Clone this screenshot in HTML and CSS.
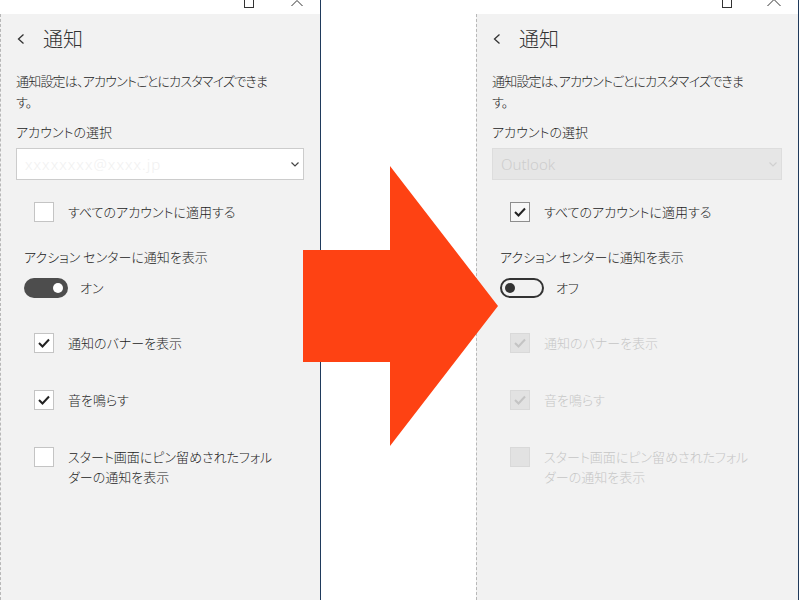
FILE: index.html
```html
<!DOCTYPE html>
<html lang="ja">
<head>
  <meta charset="UTF-8" />
  <title>通知</title>
  <link rel="stylesheet" href="styles.css">
</head>
<body>

<div class="screen">

  <div class="panel left">
    <div class="titlebar">
      <span class="max-icon"></span>
      <svg class="close-icon" width="12" height="6" viewBox="0 0 12 6"><path d="M0.5 6 L6 0.5 L11.5 6" fill="none" stroke="#333" stroke-width="1"/></svg>
    </div>
    <div class="body">
      <div class="header">
        <svg class="back" width="8" height="10" viewBox="0 0 8 10"><path d="M6.5 0.5 L1.5 5 L6.5 9.5" fill="none" stroke="#333" stroke-width="1.3"/></svg>
        <span class="title">通知</span>
      </div>
      <div class="desc">通知設定は、アカウントごとにカスタマイズできま<br>す。</div>
      <div class="label">アカウントの選択</div>
      <div class="select">
        <span class="select-text masked">xxxxxxxx@xxxx.jp</span>
        <svg class="chev" width="8" height="5" viewBox="0 0 8 5"><path d="M0.5 0.5 L4 4 L7.5 0.5" fill="none" stroke="#444" stroke-width="1.2"/></svg>
      </div>
      <div class="check-row first">
        <span class="box"></span>
        <span>すべてのアカウントに適用する</span>
      </div>
      <div class="section-label">アクション センターに通知を表示</div>
      <div class="toggle-row">
        <span class="toggle on"><span class="knob"></span></span>
        <span>オン</span>
      </div>
      <div class="check-row item">
        <span class="box"><svg width="18" height="18" viewBox="0 0 18 18"><path d="M4 9 L7.5 12.5 L14 5.5" fill="none" stroke="#222" stroke-width="2"/></svg></span>
        <span>通知のバナーを表示</span>
      </div>
      <div class="check-row item">
        <span class="box"><svg width="18" height="18" viewBox="0 0 18 18"><path d="M4 9 L7.5 12.5 L14 5.5" fill="none" stroke="#222" stroke-width="2"/></svg></span>
        <span>音を鳴らす</span>
      </div>
      <div class="check-row item">
        <span class="box"></span>
        <span>スタート画面にピン留めされたフォル<br>ダーの通知を表示</span>
      </div>
    </div>
  </div>

  <div class="gap"></div>

  <div class="panel right">
    <div class="titlebar">
      <span class="max-icon"></span>
      <svg class="close-icon" width="14" height="7" viewBox="0 0 14 7"><path d="M0.5 7 L7 0.5 L13.5 7" fill="none" stroke="#333" stroke-width="1"/></svg>
    </div>
    <div class="body">
      <div class="header">
        <svg class="back" width="8" height="10" viewBox="0 0 8 10"><path d="M6.5 0.5 L1.5 5 L6.5 9.5" fill="none" stroke="#333" stroke-width="1.3"/></svg>
        <span class="title">通知</span>
      </div>
      <div class="desc">通知設定は、アカウントごとにカスタマイズできま<br>す。</div>
      <div class="label">アカウントの選択</div>
      <div class="select disabled">
        <span class="select-text">Outlook</span>
        <svg class="chev" width="8" height="5" viewBox="0 0 8 5"><path d="M0.5 0.5 L4 4 L7.5 0.5" fill="none" stroke="#d0d0d0" stroke-width="1.2"/></svg>
      </div>
      <div class="check-row first">
        <span class="box checked"><svg width="18" height="18" viewBox="0 0 18 18"><path d="M4 9 L7.5 12.5 L14 5.5" fill="none" stroke="#222" stroke-width="2"/></svg></span>
        <span>すべてのアカウントに適用する</span>
      </div>
      <div class="section-label">アクション センターに通知を表示</div>
      <div class="toggle-row">
        <span class="toggle off"><span class="knob"></span></span>
        <span>オフ</span>
      </div>
      <div class="check-row item disabled">
        <span class="box"><svg width="18" height="18" viewBox="0 0 18 18"><path d="M4 9 L7.5 12.5 L14 5.5" fill="none" stroke="#c4c4c4" stroke-width="2"/></svg></span>
        <span>通知のバナーを表示</span>
      </div>
      <div class="check-row item disabled">
        <span class="box"><svg width="18" height="18" viewBox="0 0 18 18"><path d="M4 9 L7.5 12.5 L14 5.5" fill="none" stroke="#c4c4c4" stroke-width="2"/></svg></span>
        <span>音を鳴らす</span>
      </div>
      <div class="check-row item disabled">
        <span class="box"></span>
        <span>スタート画面にピン留めされたフォル<br>ダーの通知を表示</span>
      </div>
    </div>
  </div>

  <svg class="arrow" width="195" height="280" viewBox="0 0 195 280">
    <polygon points="0,84 87,84 87,0 195,140 87,280 87,196 0,196" fill="#fe4213"/>
  </svg>

</div>

</body>
</html>
```

FILE: styles.css
```css
body {
  margin: 0;
  width: 800px;
  height: 600px;
  overflow: hidden;
  background: #fff;
  font-family: "Noto Sans CJK JP", "Noto Sans", sans-serif;
  font-feature-settings: "palt";
  font-weight: 300;
  color: #222;
}
.screen { display: flex; height: 600px; position: relative; }

/* settings window */
.panel { display: flex; flex-direction: column; height: 600px; }
.panel.left { width: 320px; border-right: 1px solid #1f3a5c; }
.panel.right { width: 322px; border-right: 1px solid #1f3a5c; }
.gap { width: 155px; }

.titlebar { height: 14px; flex: none; background: #fff; display: flex; justify-content: flex-end; align-items: flex-end; padding-right: 17px; gap: 37px; overflow: hidden; }
.panel.right .titlebar { padding-right: 17px; gap: 35px; }
.max-icon { width: 10px; height: 12px; box-sizing: border-box; border: 1px solid #333; margin-bottom: 6px; }
.close-icon { margin-bottom: 8px; }

.body { flex: 1; background: #f2f2f2; border-left: 1px dashed #b8b8b8; padding: 0 16px 0 15px; font-size: 13px; }

.header { height: 50px; display: flex; align-items: center; }
.back { margin-left: 1px; }
.title { margin-left: 18px; font-size: 20px; line-height: 28px; color: #333; }

.desc { margin-top: 6px; line-height: 21px; white-space: nowrap; letter-spacing: -0.8px; }
.label { margin-top: 9px; line-height: 21px; }

.select { margin-top: 6px; height: 32px; box-sizing: border-box; border: 1px solid #cccccc; background: #fff; display: flex; align-items: center; justify-content: space-between; padding: 0 4px 0 8px; }
.select-text { font-family: "Noto Sans", sans-serif; font-size: 15px; }
.select-text.masked { color: #f1f1f1; letter-spacing: 1px; }
.select.disabled { background: #e6e6e6; border-color: #dddddd; }
.select.disabled .select-text { color: #cdcdcd; }

.check-row { display: flex; align-items: flex-start; gap: 14px; margin-left: 18px; line-height: 20px; white-space: nowrap; }
.check-row.first { margin-top: 22px; }
.check-row.item { margin-top: 37px; }
.toggle-row + .check-row.item { margin-top: 35px; }
.box { width: 20px; height: 20px; box-sizing: border-box; border: 1px solid #c4c4c4; background: #fff; flex: none; display: flex; align-items: center; justify-content: center; }
.box.checked { border-color: #8e8e8e; background: #f7f7f7; }
.check-row.disabled { color: #c6c6c6; }
.check-row.disabled .box { background: #e2e2e2; border-color: #d9d9d9; }

.section-label { margin-top: 24px; margin-left: 8px; line-height: 21px; }

.toggle-row { margin-top: 11px; margin-left: 8px; display: flex; align-items: center; gap: 12px; line-height: 20px; }
.toggle { width: 44px; height: 20px; box-sizing: border-box; border-radius: 10px; display: flex; align-items: center; }
.toggle .knob { width: 10px; height: 10px; border-radius: 50%; }
.toggle.on { background: #4d4d4d; justify-content: flex-end; padding: 0 5px; }
.toggle.on .knob { background: #fff; }
.toggle.off { border: 2px solid #333; justify-content: flex-start; padding: 0 3px; }
.toggle.off .knob { background: #333; }

/* big arrow between the two screenshots */
.arrow { position: absolute; left: 303px; top: 166px; }
```
